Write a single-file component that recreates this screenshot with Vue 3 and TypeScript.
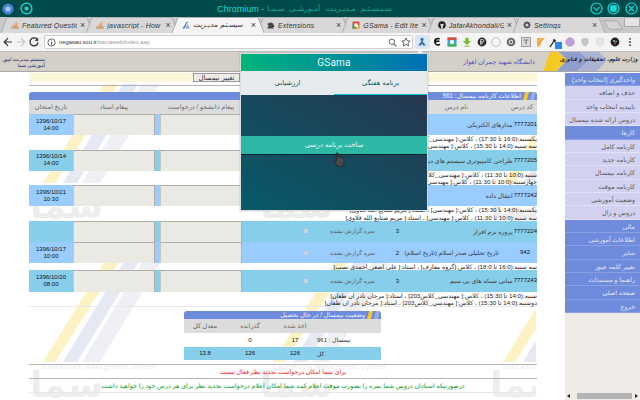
<script setup lang="ts">
interface Course {
  date: string[];
  code: string;
  name: string;
  status: string;
  units: string;
  times: string[];
  tone: string;
}

interface NavItem {
  label: string;
  kind: string;
}

// Tabs.
const tabs = [
  { title: "Featured Questio", icon: "so", active: false },
  { title: "javascript - How", icon: "so", active: false },
  { title: "سیسـتم مدیـریت", icon: "sama", active: true },
  { title: "Extensions", icon: "puzzle", active: false },
  { title: "GSama - Edit Ite", icon: "gsama", active: false },
  { title: "JafarAkhondali/GS", icon: "github", active: false },
  { title: "Settings", icon: "gear", active: false },
];

// Courses.
const reported = "نمره گزارش نشده";
const courses: Course[] = [
  {
    date: ["1396/10/17", "14:00"],
    code: "7777201",
    name: "مدارهای الکتریکی",
    status: reported,
    units: "3",
    tone: "blue",
    times: [
      "یکشنبه:(16:0 تا 17:30) ، کلاس:[ مهندسی_کلاس204] ، استاد:[ محمد رضا]",
      "سه شنبه:(14:0 تا 15:30) ، کلاس:[ مهندسی_کلاس204] ، استاد:[ محمد رضا]",
    ],
  },
  {
    date: ["1396/10/14", "14:00"],
    code: "7777205",
    name: "طراحی کامپیوتری سیستم های دیجیتال",
    status: reported,
    units: "3",
    tone: "sky",
    times: [
      "شنبه:(10:0 تا 11:30) ، کلاس:[ مهندسی_کلاس102] ، استاد:[ علی احمدی]",
      "چهارشنبه:(10:0 تا 11:30) ، کلاس:[ مهندسی_کلاس102] ، استاد:[ علی احمدی]",
    ],
  },
  {
    date: ["1396/10/21", "10:30"],
    code: "7777242",
    name: "انتقال داده",
    status: reported,
    units: "3",
    tone: "blue",
    times: [
      "یکشنبه:(14:0 تا 15:30) ، کلاس:[ مهندسی] ، استاد:[ مریم صنایع الله قلاوی]",
      "سه شنبه:(10:0 تا 11:30) ، کلاس:[ مهندسی] ، استاد:[ مریم صنایع الله قلاوی]",
    ],
  },
  {
    date: [],
    code: "7777224",
    name: "پروژه نرم افزار",
    status: reported,
    units: "3",
    tone: "sky",
    times: [],
  },
  {
    date: ["1396/10/17", "10:00"],
    code: "942",
    name: "تاریخ تحلیلی صدر اسلام (تاریخ اسلام)",
    status: reported,
    units: "2",
    tone: "blue",
    times: ["سه شنبه:(16:0 تا 18:0) ، کلاس:[گروه معارف] ، استاد:[ علی اصغر_احمدی نسب]"],
  },
  {
    date: ["1396/10/20", "08:00"],
    code: "7777243",
    name: "مبانی شبکه های بی سیم",
    status: reported,
    units: "3",
    tone: "sky",
    times: [
      "شنبه:(14:0 تا 15:30) ، کلاس:[ مهندسی_کلاس203] ، استاد:[ مرجان نادر ان طغان]",
      "دوشنبه:(14:0 تا 15:30) ، کلاس:[ مهندسی_کلاس203] ، استاد:[ مرجان نادر ان طغان]",
    ],
  },
];

// Side menu.
const navItems: NavItem[] = [
  { label: "واحدگیری (انتخاب واحد)", kind: "head" },
  { label: "حذف و اضافه", kind: "item" },
  { label: "تاییدیه انتخاب واحد", kind: "item" },
  { label: "دروس ارائه شده نیمسال", kind: "item" },
  { label: "کارها", kind: "head" },
  { label: "کارنامه کامل", kind: "item" },
  { label: "کارنامه جدید", kind: "item" },
  { label: "کارنامه نیمسال", kind: "item" },
  { label: "کارنامه موقت", kind: "item" },
  { label: "وضعیت آموزشی", kind: "item" },
  { label: "دروس و زال", kind: "item" },
  { label: "مالی", kind: "head" },
  { label: "اطلاعات آموزشی", kind: "head" },
  { label: "سایر", kind: "head" },
  { label: "تغییر کلمه عبور", kind: "head" },
  { label: "راهنما و مستندات", kind: "head" },
  { label: "صفحه اصلی", kind: "head" },
  { label: "خروج", kind: "head" },
];
</script>

<template>
  <div class="window">
    <!-- TitleBar -->
    <div class="title-bar">
      <div class="title-left">
        <svg width="12" height="12" viewBox="0 0 12 12">
          <circle cx="6" cy="6" r="5.5" fill="#4a7fd8" />
          <circle cx="6" cy="6" r="2.6" fill="#a9c6f0" />
        </svg>
        <svg width="13" height="13" viewBox="0 0 13 13">
          <circle cx="6.5" cy="6.5" r="5.4" fill="none" stroke="#12dcdc" stroke-width="1.3" />
          <circle cx="6.5" cy="6.5" r="2" fill="#12dcdc" />
        </svg>
      </div>
      <div class="title-text">
        <span class="title-name">Chromium -</span>
        <span class="title-page" dir="rtl">سـیـسـتـم مـدیـریـت آمـوزشـی سـمـا</span>
      </div>
      <div class="title-right">
        <svg width="13" height="13" viewBox="0 0 13 13">
          <circle cx="6.5" cy="6.5" r="5.5" fill="none" stroke="#12dcdc" stroke-width="1.2" />
          <path d="M3.5 5.2 L6.5 8.4 L9.5 5.2" fill="none" stroke="#12dcdc" stroke-width="1.2" />
        </svg>
        <svg width="13" height="13" viewBox="0 0 13 13">
          <circle cx="6.5" cy="6.5" r="5.5" fill="none" stroke="#12dcdc" stroke-width="1.2" />
          <rect x="3.3" y="3.3" width="6.4" height="6.4" rx="1" fill="#12dcdc" />
        </svg>
        <svg width="13" height="13" viewBox="0 0 13 13">
          <circle cx="6.5" cy="6.5" r="5.5" fill="none" stroke="#12dcdc" stroke-width="1.2" />
          <path d="M4 4 L9 9 M9 4 L4 9" fill="none" stroke="#12dcdc" stroke-width="1.2" />
        </svg>
      </div>
    </div>

    <!-- Tabs -->
    <div class="tab-strip">
      <div
        v-for="tab in tabs"
        v-bind:key="tab.title"
        v-bind:class="{ active: tab.active }"
        class="tab"
      >
        <svg class="tab-shape" viewBox="0 0 92 16" preserveAspectRatio="none">
          <path d="M0 16 L6 0.5 H86 L92 16" />
        </svg>
        <svg v-if="tab.icon === 'so'" class="fav" viewBox="0 0 8 8">
          <path d="M1 5 V8 H7 V5" fill="none" stroke="#a08868" stroke-width="0.8" />
          <path d="M2 6.6 H6 M2 5.2 L6 5.8 M2.6 3.8 L6 5 M3.6 2.2 L6.4 4 M5 0.6 L6.8 3.2" stroke="#ee8a3c" stroke-width="0.9" />
        </svg>
        <svg v-else-if="tab.icon === 'sama'" class="fav" viewBox="0 0 8 8">
          <path d="M0.5 7.5 L5 0.5 L6 0.5 L2.4 7.5 Z" fill="#4a78c0" />
          <path d="M3 7.5 L6 3 L7.5 7.5 Z" fill="#8ea6d6" />
        </svg>
        <svg v-else-if="tab.icon === 'puzzle'" class="fav" viewBox="0 0 8 8">
          <path d="M0.6 2.2 H2.6 A1 1 0 1 1 4.6 2.2 H6.4 V4 A1 1 0 1 1 6.4 6 V7.6 H0.6 V5.8 A1 1 0 1 0 0.6 3.8 Z" fill="#444" />
        </svg>
        <svg v-else-if="tab.icon === 'gsama'" class="fav" viewBox="0 0 8 8">
          <rect x="0.5" y="0.5" width="7" height="7" fill="#e04a3a" />
          <rect x="0.5" y="4" width="3.5" height="3.5" fill="#3aa860" />
          <rect x="4" y="4" width="3.5" height="3.5" fill="#e8c23a" />
          <rect x="2.4" y="2.4" width="3.2" height="3.2" fill="#fff" />
        </svg>
        <svg v-else-if="tab.icon === 'github'" class="fav" viewBox="0 0 8 8">
          <circle cx="4" cy="4" r="3.8" fill="#222" />
          <path d="M2.4 2.4 L3.2 2.9 H4.8 L5.6 2.4 V4.2 L4.9 5 V7.4 H3.1 V5 L2.4 4.2 Z" fill="#ddd" />
        </svg>
        <svg v-else class="fav" viewBox="0 0 8 8">
          <circle cx="4" cy="4" r="2.3" fill="none" stroke="#444" stroke-width="1.4" />
          <path d="M4 0.3 V1.6 M4 6.4 V7.7 M0.3 4 H1.6 M6.4 4 H7.7 M1.4 1.4 L2.3 2.3 M5.7 5.7 L6.6 6.6 M6.6 1.4 L5.7 2.3 M2.3 5.7 L1.4 6.6" stroke="#444" stroke-width="1" />
        </svg>
        <span class="tab-title">{{ tab.title }}</span>
        <span class="tab-close">×</span>
      </div>
      <svg class="new-tab" width="22" height="10" viewBox="0 0 22 10">
        <path d="M0.5 0.5 H15 L21 9.5 H6.5 Z" fill="#d4d4d4" stroke="#999" stroke-width="0.7" />
      </svg>
      <div class="user-badge"></div>
    </div>

    <!-- Toolbar -->
    <div class="toolbar">
      <div class="nav-buttons">
        <svg width="12" height="12" viewBox="0 0 12 12">
          <path d="M10 6 H2.4 M6 2.2 L2.2 6 L6 9.8" fill="none" stroke="#333" stroke-width="1.2" />
        </svg>
        <svg width="12" height="12" viewBox="0 0 12 12">
          <path d="M2 6 H9.6 M6 2.2 L9.8 6 L6 9.8" fill="none" stroke="#c4c4c4" stroke-width="1.2" />
        </svg>
        <svg width="12" height="12" viewBox="0 0 12 12">
          <path d="M9.6 4 A4 4 0 1 0 10 6.4" fill="none" stroke="#333" stroke-width="1.3" />
          <path d="M10.2 1.6 V5 H6.8 Z" fill="#333" />
        </svg>
      </div>
      <div class="omnibox">
        <svg width="9" height="9" viewBox="0 0 9 9">
          <circle cx="4.5" cy="4.5" r="3.6" fill="none" stroke="#444" stroke-width="0.8" />
          <path d="M4.5 4 V6.6 M4.5 2.4 V3.2" stroke="#444" stroke-width="0.9" />
        </svg>
        <span class="url"><b>negasau.scu.ir</b>/samaweb/index.asp</span>
        <svg class="omni-zoom" width="9" height="9" viewBox="0 0 9 9">
          <circle cx="3.8" cy="3.8" r="2.7" fill="none" stroke="#555" stroke-width="0.9" />
          <path d="M5.8 5.8 L8.4 8.4" stroke="#555" stroke-width="1.1" />
        </svg>
        <svg width="10" height="10" viewBox="0 0 10 10">
          <path d="M5 1 L6.2 3.8 L9.2 4 L6.9 6 L7.6 9 L5 7.4 L2.4 9 L3.1 6 L0.8 4 L3.8 3.8 Z" fill="none" stroke="#444" stroke-width="0.8" />
        </svg>
      </div>
      <div class="extensions">
        <div class="ext selected">
          <svg viewBox="0 0 10 10">
            <circle cx="5" cy="2.4" r="1.6" fill="#2f6cb0" />
            <path d="M5 3.4 L8.8 8.6 H6 L5 6.6 L4 8.6 H1.2 Z" fill="#2f6cb0" />
          </svg>
        </div>
        <div class="ext">
          <svg viewBox="0 0 10 10">
            <path d="M7.6 2 C5 0.6 2.4 2.4 2.8 5 C3.2 8 6 8.6 8 7.4 M3.2 4.6 L7.4 4" fill="none" stroke="#111" stroke-width="1.6" />
          </svg>
        </div>
        <div class="ext">
          <svg viewBox="0 0 10 10">
            <rect x="0.5" y="0.5" width="9" height="9" rx="1" fill="#34a4dc" />
            <path d="M0.5 0.5 H9.5 V3 H0.5 Z" fill="#e04a3a" />
            <path d="M0.5 7 H9.5 V9.5 H0.5 Z" fill="#48b060" />
            <circle cx="5" cy="5" r="2.2" fill="#f4f4f4" />
          </svg>
        </div>
        <div class="ext">
          <svg viewBox="0 0 10 10">
            <path d="M3.4 0.8 H6.6 V4 H9.2 L5 8 L0.8 4 H3.4 Z" fill="#7cb82e" />
            <path d="M2.4 9.2 H7.6" stroke="#7cb82e" stroke-width="1" />
          </svg>
        </div>
        <div class="ext">
          <svg viewBox="0 0 10 10">
            <circle cx="5" cy="5" r="4.4" fill="#2a2a2a" />
            <path d="M3.6 2.6 H6 C7 2.6 7 5 6 5 H3.6 M5 5 V7.6 M3.6 2.6 V7.6" fill="none" stroke="#ddd" stroke-width="0.9" />
          </svg>
        </div>
        <div class="ext">
          <svg viewBox="0 0 10 10">
            <circle cx="5" cy="5" r="4.2" fill="#f6f6f6" stroke="#aaa" stroke-width="0.8" />
          </svg>
        </div>
        <div class="ext">
          <svg viewBox="0 0 10 10">
            <circle cx="5" cy="5" r="4.3" fill="#666" />
            <circle cx="5" cy="5" r="2.4" fill="#ccc" />
            <circle cx="5" cy="5" r="1" fill="#555" />
          </svg>
        </div>
        <div class="ext">
          <svg viewBox="0 0 10 10">
            <rect x="0.6" y="0.6" width="8.8" height="8.8" fill="#ddd" stroke="#888" stroke-width="0.8" />
            <path d="M2.4 3 H7.6 M5 3 V7.6" stroke="#777" stroke-width="1.1" />
          </svg>
        </div>
        <div class="ext">
          <svg viewBox="0 0 10 10">
            <path d="M1 1 H9 L5.6 4.6 L3.6 9.4 L1 9.4 Z" fill="#f4a742" />
            <path d="M1 5 L6 1" stroke="#f8d27c" stroke-width="1" />
          </svg>
        </div>
        <div class="ext dropper">
          <svg viewBox="0 0 13 13">
            <path d="M1 11 L5 5" stroke="#222" stroke-width="1.3" />
            <path d="M4.4 3.6 L6.6 5.6" stroke="#222" stroke-width="2" />
            <rect x="6" y="6" width="7" height="7" fill="#2a86f0" />
          </svg>
        </div>
        <div class="ext">
          <svg viewBox="0 0 10 10">
            <circle cx="5" cy="5" r="4.4" fill="#c79ad8" stroke="#aaa" stroke-width="0.5" />
          </svg>
        </div>
        <div class="ext">
          <svg viewBox="0 0 10 10">
            <path d="M1.4 1.8 L5 0.8 L8.6 1.8 V5 C8.6 7 6.6 8.8 5 9.4 C3.4 8.8 1.4 7 1.4 5 Z" fill="#c6c6c6" />
          </svg>
        </div>
        <div class="ext">
          <svg viewBox="0 0 10 10">
            <path d="M1.4 1.8 L5 0.8 L8.6 1.8 V5 C8.6 7 6.6 8.8 5 9.4 C3.4 8.8 1.4 7 1.4 5 Z" fill="#e6e6e6" stroke="#d0d0d0" stroke-width="0.5" />
          </svg>
        </div>
        <div class="ext">
          <svg viewBox="0 0 10 10">
            <circle cx="5" cy="5" r="4.4" fill="#1c1c24" />
            <circle cx="4" cy="4" r="1" fill="#e0c040" />
            <circle cx="6.2" cy="4.4" r="0.9" fill="#40a0d0" />
            <circle cx="5" cy="6.4" r="0.9" fill="#d05050" />
          </svg>
        </div>
        <div class="ext">
          <svg viewBox="0 0 10 10">
            <circle cx="5" cy="1.8" r="0.9" fill="#333" />
            <circle cx="5" cy="5" r="0.9" fill="#333" />
            <circle cx="5" cy="8.2" r="0.9" fill="#333" />
          </svg>
        </div>
      </div>
    </div>

    <!-- Page -->
    <div class="page">
      <div class="page-header">
        <div class="system-name" dir="rtl">سیستم مدیریت امور<br />آموزشی سما</div>
        <div class="university" dir="rtl">دانشگاه شهید چمران اهواز</div>
        <div class="ministry">
          <svg class="chevrons" width="97" height="19" viewBox="0 0 97 19">
            <path d="M38 0 H56 L64 8 L54 19 H36 L46 8 Z" fill="#aab4d2" />
            <path d="M16 0 H37 L46 8 L35 19 H14 L24 8 Z" fill="#8f9fcc" />
            <path d="M7 0 H15 L24 8 L13 19 H0 Z" fill="#f4c924" />
          </svg>
          <span class="ministry-text" dir="rtl">وزارت علوم، تحقیقات و فناوری</span>
        </div>
      </div>

      <div class="page-body">
        <div class="main">
          <!-- Watermark -->
          <svg class="watermark" width="536" height="328">
            <defs>
              <pattern id="sama-tile" x="30" y="12" width="230" height="179" patternUnits="userSpaceOnUse">
                <path d="M74 0 H88 L25 99 H13 Z" fill="#fdf2c4" />
                <path d="M93 0 H108 L47 99 H33 Z" fill="#e6e9f4" />
                <path d="M112 0 H130 L70 99 H52 Z" fill="#eef0f6" />
                <text x="13" y="106" class="wm-latin">Educational Management System</text>
                <text x="0" y="134" class="wm-logo">سما</text>
              </pattern>
            </defs>
            <rect width="536" height="328" fill="url(#sama-tile)" />
          </svg>

          <div class="content">
            <div class="semester-row">
              <button class="semester-button" type="button">تغییر نیمسال</button>
            </div>
            <hr class="rule first" />

            <!-- ReportCard -->
            <div class="panel-bar" dir="rtl">
              <span class="bar-icons">
                <i class="bar-blue"></i>
                <i class="bar-yellow"></i>
              </span>
              <span>اطلاعات کارنامه نیمسال: 961</span>
            </div>
            <div class="course-head">
              <span>تاریخ امتحان</span>
              <span>پیغام استاد</span>
              <span></span>
              <span>پیغام دانشجو / درخواست</span>
              <span class="head-name">نام درس</span>
              <span class="head-code">کد درس</span>
            </div>

            <template v-for="course in courses" v-bind:key="course.code">
              <div v-bind:class="course.tone" class="course-row">
                <div class="course-date">
                  <div v-for="line in course.date" v-bind:key="line">{{ line }}</div>
                </div>
                <div class="note"></div>
                <div></div>
                <div class="note"></div>
                <div class="course-mark"><i></i></div>
                <div class="course-status" dir="rtl">{{ course.status }}</div>
                <div class="course-units">{{ course.units }}</div>
                <div class="course-title" dir="rtl">
                  <span v-bind:class="{ short: course.code.length < 7 }" class="course-code">{{ course.code }}</span>
                  <span>{{ course.name }}</span>
                </div>
              </div>
              <div v-if="course.times.length" class="course-times" dir="rtl">
                <div v-for="time in course.times" v-bind:key="time">{{ time }}</div>
              </div>
            </template>
            <hr class="rule faint" />

            <!-- Semester status -->
            <div class="status-table">
              <div class="panel-bar" dir="rtl">
                <span class="bar-icons">
                  <i class="bar-blue"></i>
                  <i class="bar-yellow"></i>
                </span>
                <span>وضعیت نیمسال / در حال تحصیل</span>
              </div>
              <div class="status-row head">
                <span>معدل کل</span>
                <span>گذرانده</span>
                <span>اخذ شده</span>
                <span></span>
              </div>
              <div class="status-row">
                <span></span>
                <span>0</span>
                <span>17</span>
                <span class="status-label" dir="rtl">نیمسال : 961</span>
              </div>
              <div class="status-row sky">
                <span>13.8</span>
                <span>126</span>
                <span>126</span>
                <span class="status-label" dir="rtl">کل</span>
              </div>
            </div>

            <hr class="rule" />
            <div class="notice red" dir="rtl">برای شما امکان درخواست تجدید نظر فعال نیست</div>
            <hr class="rule" />
            <div class="notice green" dir="rtl">
              درصورتیکه استادان دروس شما نمره را بصورت موقت اعلام کنند شما امکان اعلام درخواست تجدید نظر برای هر درس خود را خواهید داشت
            </div>
            <hr class="rule faint" />
          </div>
        </div>

        <!-- SideMenu -->
        <div class="side">
          <nav class="side-nav" dir="rtl">
            <div
              v-for="item in navItems"
              v-bind:key="item.label"
              v-bind:class="item.kind"
              class="nav-row"
            >
              {{ item.label }}
            </div>
          </nav>
          <div class="side-scroll">
            <i class="arrow-left"></i>
            <span class="scroll-thumb"></span>
            <i class="arrow-right"></i>
          </div>
        </div>
      </div>

      <!-- Extension popup -->
      <div class="popup">
        <i class="popup-arrow"></i>
        <div class="popup-title">GSama</div>
        <div class="popup-tabs">
          <div class="popup-tab" dir="rtl">ارزشیابی</div>
          <div class="popup-tab current" dir="rtl">برنامه هفتگی</div>
        </div>
        <div class="popup-body">
          <div class="popup-action" dir="rtl">ساخت برنامه درسی</div>
          <svg class="hand" width="12" height="15" viewBox="0 0 12 15">
            <path
              d="M3.4 1.6 C3.4 0.4 5.2 0.4 5.2 1.6 V5.4 C5.6 4.7 7 4.8 7.2 5.6 C7.7 5 9 5.2 9.2 6 C9.8 5.6 11 6 11 7 V10 C11 12 10 14 9.4 14.4 H4.4 C3.8 13.4 2.6 11.6 1.2 9.6 C0.4 8.4 1.8 7.4 2.6 8.2 L3.4 9 Z"
              fill="#4a4a4a"
              stroke="#1d1d1d"
              stroke-width="0.7"
            />
          </svg>
        </div>
      </div>
    </div>
  </div>
</template>

<style>
html,
body {
  margin: 0;
  background: #fff;
  overflow: hidden;
}
</style>

<style scoped>
.window {
  width: 640px;
  height: 400px;
  display: flex;
  flex-direction: column;
  overflow: hidden;
  font-family: "Liberation Sans", "DejaVu Sans", sans-serif;
}

/* Title bar */
.title-bar {
  height: 17px;
  flex: none;
  display: flex;
  align-items: center;
  justify-content: space-between;
  padding: 0 2px;
  background: #004b49;
  box-sizing: border-box;
}

.title-left,
.title-right {
  display: flex;
  align-items: center;
}

.title-left {
  gap: 6px;
}

.title-right {
  gap: 4.5px;
}

.title-text {
  display: flex;
  gap: 3px;
  align-items: center;
  margin-left: -14px;
}

.title-name {
  color: #1fd8d2;
  font-size: 9px;
}

.title-page {
  color: #14a78e;
  font-size: 7.5px;
  word-spacing: 3px;
}

/* Tabs */
.tab-strip {
  height: 16px;
  flex: none;
  display: flex;
  align-items: flex-end;
  padding-left: 4px;
  background: #c9c9c9;
}

.tab {
  position: relative;
  width: 85.33px;
  height: 16px;
  flex: none;
  display: flex;
  align-items: center;
  gap: 3px;
  padding: 0 4px 0 7px;
  box-sizing: border-box;
  font-size: 7px;
  color: #333;
}

.tab-shape {
  position: absolute;
  left: -3px;
  top: 0;
  width: 92px;
  height: 16px;
  fill: #d8d8d8;
  stroke: #a2a2a2;
  stroke-width: 0.8;
}

.tab.active {
  z-index: 1;
}

.tab.active .tab-shape {
  fill: #f4f4f4;
}

.fav {
  position: relative;
  width: 8px;
  height: 8px;
  flex: none;
}

.tab-title {
  position: relative;
  flex: 1;
  min-width: 0;
  overflow: hidden;
  white-space: nowrap;
  font-style: italic;
  letter-spacing: 0.2px;
}

.tab-close {
  position: relative;
  flex: none;
  font-size: 9px;
  color: #444;
}

.new-tab {
  margin: 0 0 3px 2px;
}

.user-badge {
  width: 15px;
  height: 8px;
  margin: 0 0 6px 0;
  background: #e4e4e4;
  border: 1px solid #aaa;
  border-radius: 1px;
}

/* Toolbar */
.toolbar {
  height: 19px;
  flex: none;
  display: flex;
  align-items: center;
  background: #f4f4f4;
  border-bottom: 1px solid #bdbdbd;
  box-sizing: border-box;
}

.nav-buttons {
  width: 44px;
  flex: none;
  display: flex;
  gap: 1px;
  padding-left: 2px;
  box-sizing: border-box;
}

.omnibox {
  width: 369px;
  height: 14px;
  flex: none;
  display: flex;
  align-items: center;
  gap: 3px;
  padding: 0 1px 0 2px;
  box-sizing: border-box;
  background: #fff;
  border: 1px solid #d0d0d0;
  border-radius: 2px;
}

.url {
  flex: 1;
  font-size: 5.8px;
  color: #9a9a9a;
}

.url b {
  font-weight: 400;
  color: #333;
}

.omni-zoom {
  margin-right: 1px;
}

.extensions {
  display: flex;
  align-items: center;
  gap: 0;
  margin-left: 2px;
}

.ext {
  width: 14.8px;
  height: 14px;
  flex: none;
  display: flex;
  align-items: center;
  justify-content: center;
}

.ext svg {
  width: 10px;
  height: 10px;
}

.ext.selected {
  background: #dbe6f2;
  border-radius: 2px;
}

.ext.dropper svg {
  width: 13px;
  height: 13px;
}

/* Page */
.page {
  position: relative;
  flex: 1;
  min-height: 0;
  display: flex;
  flex-direction: column;
}

.page-header {
  height: 20px;
  flex: none;
  display: flex;
  align-items: center;
  justify-content: space-between;
  background: #d4d0c8;
  border-bottom: 1px solid #a8a8a8;
  box-sizing: border-box;
}

.system-name {
  width: 44px;
  margin-left: 1px;
  font-size: 5px;
  line-height: 6px;
  white-space: nowrap;
  color: #20206a;
}

.university {
  margin-left: auto;
  margin-right: 8px;
  font-size: 6.5px;
  color: #5a4ab8;
}

.ministry {
  position: relative;
  width: 97px;
  height: 19px;
  flex: none;
  overflow: hidden;
}

.chevrons {
  position: absolute;
  left: 0;
  top: 0;
}

.ministry-text {
  position: absolute;
  right: 2px;
  top: 4px;
  font-family: "DejaVu Serif", "DejaVu Sans", serif;
  font-size: 5.6px;
  font-weight: 700;
  font-style: italic;
  white-space: nowrap;
  color: #16183a;
}

.page-body {
  flex: 1;
  min-height: 0;
  display: flex;
}

.main {
  position: relative;
  flex: 1;
  min-width: 0;
  padding: 1px 28px 0 29px;
  overflow: hidden;
}

.watermark {
  position: absolute;
  left: 0;
  top: 0;
}

.wm-latin {
  font-family: "Liberation Sans", sans-serif;
  font-size: 6.6px;
  letter-spacing: 0.5px;
  fill: #e8e8e8;
}

.wm-logo {
  font-family: "DejaVu Sans", sans-serif;
  font-size: 36px;
  font-weight: 700;
  fill: #ededed;
}

.content {
  position: relative;
}

.semester-row {
  height: 9px;
  display: flex;
  padding-left: 164px;
  background: #fdf6d8;
}

.semester-button {
  width: 47px;
  height: 9px;
  padding: 0;
  font-family: inherit;
  font-size: 6.8px;
  line-height: 7px;
  color: #333;
  background: #ecebe6;
  border: 1px solid #999;
  border-radius: 0;
}

.rule {
  height: 1px;
  margin: 0;
  border: none;
  background: #b4b4b4;
}

.rule.first {
  margin: 3px 0 6px;
}

.rule.faint {
  background: #e8e8e8;
}

.panel-bar {
  height: 8px;
  display: flex;
  align-items: center;
  gap: 2px;
  padding-right: 1px;
  font-size: 6.4px;
  color: #f2f2ff;
  background: #6f8bdc;
  border-radius: 3px 3px 0 0;
  overflow: hidden;
}

.bar-icons {
  display: flex;
  gap: 1px;
}

.bar-icons i {
  width: 6px;
  height: 8px;
  clip-path: polygon(35% 0, 100% 0, 65% 100%, 0 100%);
}

.bar-yellow {
  background: #f4c924;
}

.bar-blue {
  background: #9aaee4;
}

.course-head {
  height: 14px;
  display: grid;
  grid-template-columns: 44px 82px 5px 82px 1fr 30px;
  align-items: center;
  text-align: center;
  font-size: 6.4px;
  color: #666;
  background: #dcdcdc;
}

.head-name {
  text-align: right;
  padding-right: 39px;
}

.course-row {
  height: 21.2px;
  display: grid;
  grid-template-columns: 44px 82px 5px 82px 78px 65px 25px 1fr;
  align-items: center;
}

.course-row.blue {
  background: #99ccff;
}

.course-row.sky {
  background: #87ceeb;
}

.course-date {
  font-size: 6px;
  line-height: 7px;
  text-align: center;
  color: #111;
}

.note {
  height: 100%;
  background: #ebe9e3;
  border-top: 1px solid #b0aea8;
  border-left: 1px solid #c8c6c0;
  border-right: 1px solid #b0aea8;
  box-sizing: border-box;
}

.course-mark {
  display: flex;
  justify-content: flex-end;
  padding-right: 12px;
}

.course-mark i {
  width: 4px;
  height: 4px;
  background: #c8d4dc;
}

.course-status {
  font-size: 5.8px;
  white-space: nowrap;
  text-align: center;
  color: #5a5a5a;
}

.course-units {
  font-size: 6px;
  text-align: center;
  color: #111;
}

.course-title {
  display: flex;
  gap: 1px;
  min-width: 0;
  font-size: 6.2px;
  white-space: nowrap;
  color: #3a3a3a;
}

.course-code {
  font-size: 6px;
  color: #111;
}

.course-code.short {
  margin: 0 7px 0 20px;
}

.course-times {
  font-size: 6.2px;
  line-height: 7.2px;
  white-space: nowrap;
  color: #222;
}

.course-times:last-of-type {
  padding-bottom: 3px;
}

.status-table {
  width: 197px;
  margin: 4px 0 4px 155px;
}

.status-row {
  height: 13.7px;
  display: grid;
  grid-template-columns: 42px 48px 42px 1fr;
  align-items: center;
  text-align: center;
  font-size: 6px;
  color: #111;
}

.status-row.head {
  height: 14px;
  font-size: 6.4px;
  color: #666;
  background: #dcdcdc;
}

.status-row.sky {
  background: #87ceeb;
}

.status-label {
  text-align: left;
  padding-left: 1px;
  padding-right: 30px;
  white-space: nowrap;
  color: #333;
}

.notice {
  height: 13px;
  display: flex;
  align-items: center;
  justify-content: center;
  white-space: nowrap;
}

.notice.red {
  font-size: 6.2px;
  color: #f01818;
}

.notice.green {
  font-size: 6.36px;
  color: #0a9a1e;
}

/* Side menu */
.side {
  width: 75px;
  flex: none;
  display: flex;
  flex-direction: column;
  padding-top: 1px;
  background: linear-gradient(#fff 1px, #efebe7 1px);
  box-sizing: border-box;
}

.side-nav {
  flex: 1;
  min-height: 0;
}

.nav-row {
  height: 13.33px;
  padding: 0 5px;
  box-sizing: border-box;
  font-size: 6.4px;
  line-height: 13px;
  white-space: nowrap;
}

.nav-row.head {
  color: #e6e8f8;
  background: #6f8bdc;
  border-bottom: 1px solid #8aa0e2;
}

.nav-row.item {
  color: #555;
  background: #d2d2f0;
  border-bottom: 1px solid #e2e2f6;
}

.side-scroll {
  height: 8px;
  flex: none;
  display: flex;
  align-items: center;
  gap: 3px;
  padding: 0 2px;
}

.side-scroll i {
  width: 0;
  height: 0;
  border-top: 2px solid transparent;
  border-bottom: 2px solid transparent;
}

.side-scroll .arrow-left {
  border-right: 3px solid #222;
}

.side-scroll .arrow-right {
  border-left: 3px solid #222;
}

.scroll-thumb {
  flex: 1;
  height: 6px;
  margin-left: 4px;
  background: #b4b4b4;
}

/* Popup */
.popup {
  position: absolute;
  left: 240px;
  top: 1px;
  width: 188px;
  height: 158px;
  display: flex;
  flex-direction: column;
  background: #fff;
  border: 1px solid #ddd;
  box-sizing: border-box;
  box-shadow: 0 0 1px #888;
}

.popup-arrow {
  position: absolute;
  right: 4px;
  top: -4px;
  width: 0;
  height: 0;
  border-left: 3px solid transparent;
  border-right: 3px solid transparent;
  border-bottom: 3px solid #f2f2f2;
}

.popup-title {
  height: 17px;
  flex: none;
  font-family: "Roboto", "Liberation Sans", sans-serif;
  font-size: 10px;
  line-height: 17px;
  text-align: center;
  letter-spacing: 0.2px;
  color: #f0f4f4;
  background: linear-gradient(90deg, #00b47a, #0070b4);
}

.popup-tabs {
  height: 24px;
  flex: none;
  display: flex;
  background: #e8ebee;
}

.popup-tab {
  flex: 1;
  font-size: 6.8px;
  line-height: 23px;
  text-align: center;
  color: #0a5560;
  box-sizing: border-box;
}

.popup-tab.current {
  border-bottom: 1px solid #12c0d4;
}

.popup-body {
  position: relative;
  flex: 1;
  min-height: 0;
  padding-top: 41px;
  box-sizing: border-box;
  background: linear-gradient(30deg, #065a6a, #263850);
}

.popup-action {
  height: 19px;
  font-size: 7px;
  line-height: 18px;
  text-align: center;
  color: #eef8f6;
  background: #2cb8a4;
  border-bottom: 1px solid #10222c;
  box-sizing: border-box;
}

.hand {
  position: absolute;
  left: 92px;
  top: 57px;
}
</style>
